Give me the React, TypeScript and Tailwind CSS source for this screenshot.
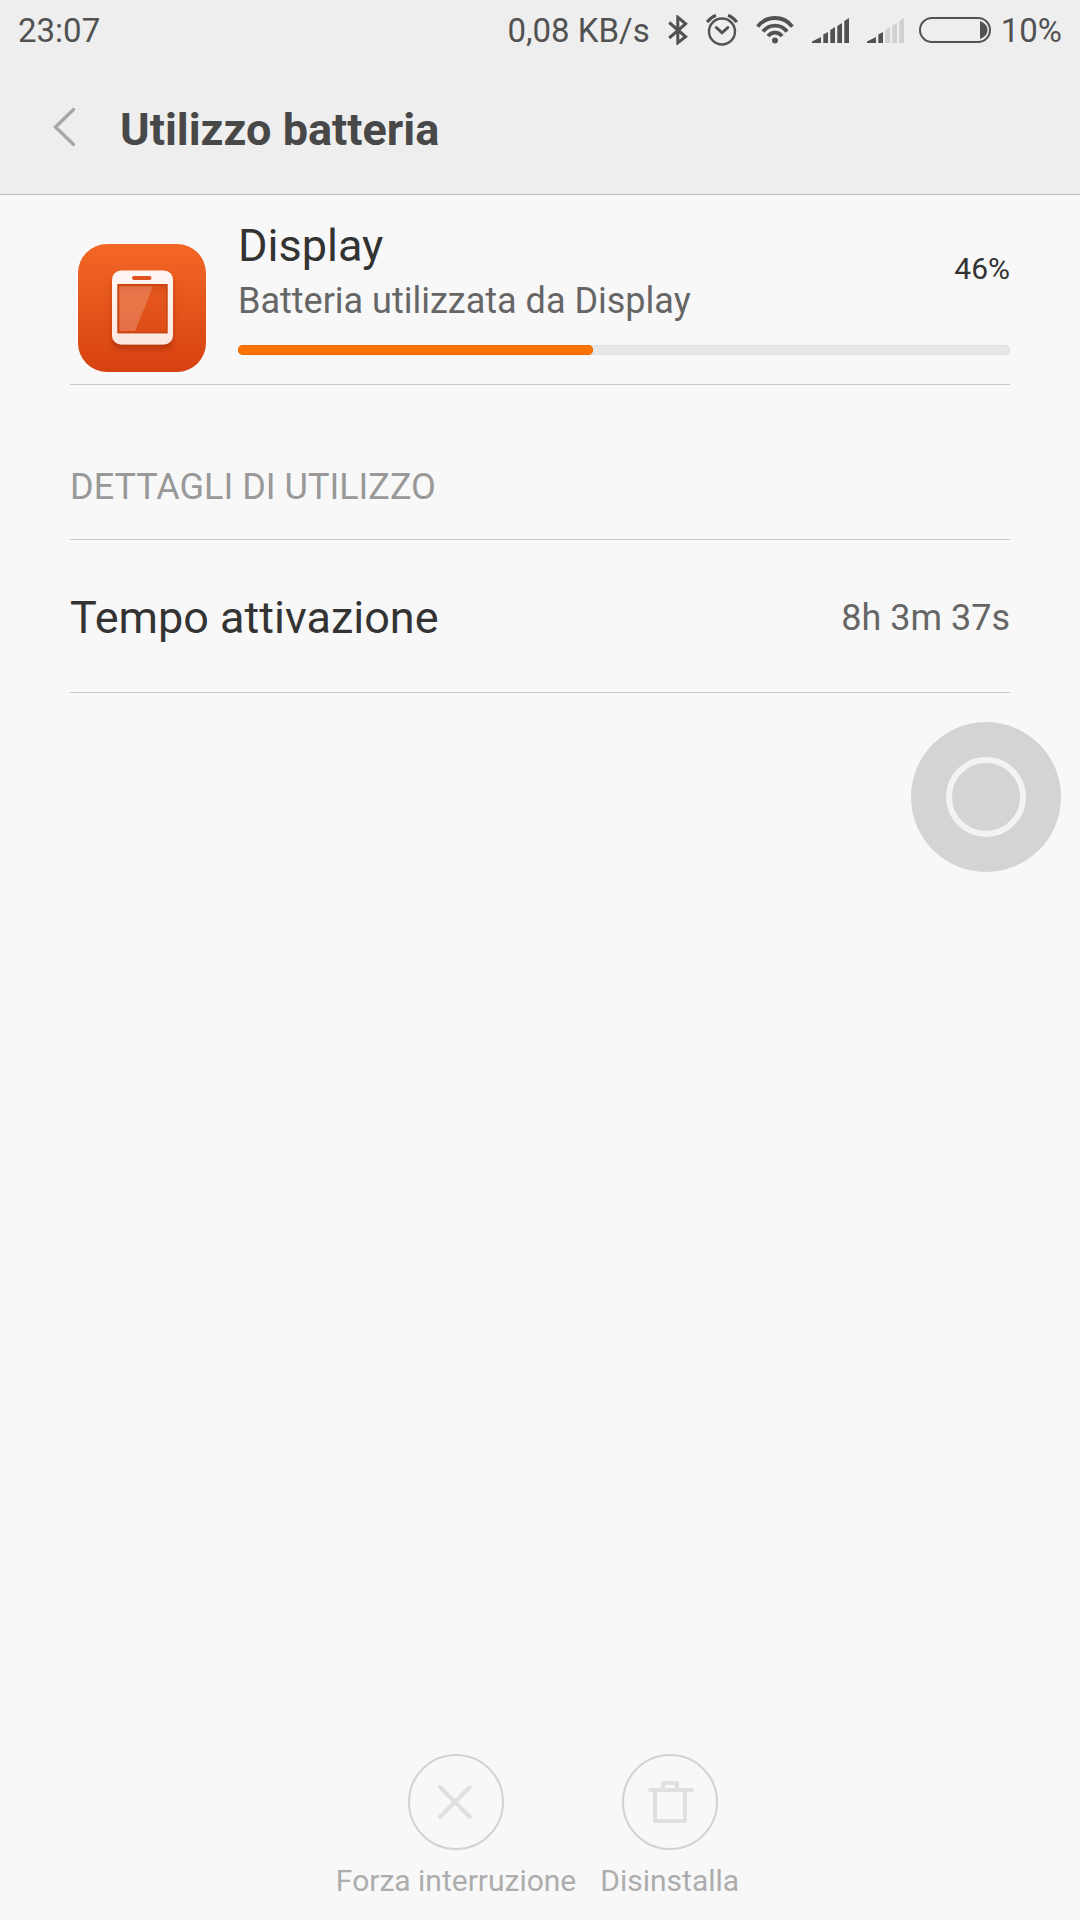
import type { ReactNode } from "react"

function BluetoothIcon() {
  return (
    <svg className="h-[30px] w-5" viewBox="0 0 20 30" fill="none" stroke="currentColor" strokeWidth="3">
      <path d="M1.2 7.5 L17.6 21.8 L9.8 27.8 V2.2 L17.6 8.8 L1.2 23" />
    </svg>
  )
}

function AlarmIcon() {
  return (
    <svg className="size-8" viewBox="0 0 32 32" fill="none" stroke="currentColor">
      <circle cx="16" cy="17.5" r="13" strokeWidth="2.4" />
      <path d="M10.3 13.5 L16 18.8 L21.9 13.5" strokeWidth="3" strokeLinecap="round" />
      <path d="M1.2 8.2 Q4.3 3.5 10 1.3 M22 1.3 Q27.7 3.5 30.8 8.2" strokeWidth="3" />
    </svg>
  )
}

function WifiIcon() {
  return (
    <svg className="h-7 w-[38px]" viewBox="0 0 38 28" fill="none" stroke="currentColor" strokeWidth="3.8">
      <path d="M1.7 10.6 A21.7 21.7 0 0 1 36.3 10.6" />
      <path d="M7 15.6 A14.9 14.9 0 0 1 31 15.6" />
      <path d="M12 20.2 A8.6 8.6 0 0 1 26 20.2" />
      <circle cx="19" cy="24.4" r="3" fill="currentColor" stroke="none" />
    </svg>
  )
}

const signalBars = [
  "M0 25 V23.5 L9 19 V25 Z",
  "M11.3 25 V16.5 L16 14 V25 Z",
  "M18.3 25 V12 L23 9 V25 Z",
  "M25.3 25 V8 L30 5 V25 Z",
  "M32.3 25 V3 L37 0 V25 Z",
]

function SignalIcon({ level }: { level: number }) {
  return (
    <svg className="h-[25px] w-[37px]" viewBox="0 0 37 25">
      {signalBars.map((d, i) => (
        <path key={d} d={d} fill={i < level ? "#525252" : "#d0d0d0"} />
      ))}
    </svg>
  )
}

function BatteryIcon() {
  return (
    <svg className="h-[26px] w-[72px]" viewBox="0 0 72 26">
      <rect x="1" y="1" width="70" height="24" rx="12" fill="none" stroke="currentColor" strokeWidth="2" />
      <path d="M61 4 C66 6 68.5 9 68.5 13 C68.5 17 66 20 61 22 Z" fill="currentColor" />
    </svg>
  )
}

function DisplayIcon() {
  return (
    <svg className="size-32 shrink-0" viewBox="0 0 128 128">
      <defs>
        <linearGradient id="tile" x1="0" y1="0" x2="0" y2="1">
          <stop offset="0" stopColor="#f36726" />
          <stop offset="1" stopColor="#d64210" />
        </linearGradient>
        <linearGradient id="phone" x1="0" y1="0" x2="0" y2="1">
          <stop offset="0" stopColor="#fff6f3" />
          <stop offset="1" stopColor="#fde7df" />
        </linearGradient>
        <linearGradient id="screen" x1="0" y1="0" x2="0" y2="1">
          <stop offset="0" stopColor="#d84f1a" />
          <stop offset="0.25" stopColor="#e4561d" />
          <stop offset="1" stopColor="#dd4d17" />
        </linearGradient>
        <filter id="shadow" x="-20%" y="-20%" width="140%" height="150%">
          <feDropShadow dx="0" dy="5" stdDeviation="2.5" floodColor="#8f2600" floodOpacity="0.45" />
        </filter>
      </defs>
      <rect width="128" height="128" rx="29" fill="url(#tile)" />
      <rect x="34" y="26.5" width="61" height="74" rx="9" fill="url(#phone)" filter="url(#shadow)" />
      <rect x="54" y="32" width="19.5" height="4" rx="2" fill="#de5220" />
      <rect x="40" y="40.7" width="49" height="48" fill="url(#screen)" stroke="#c9410f" strokeWidth="1.4" />
      <path d="M41.5 42.5 H75 L57 87 H41.5 Z" fill="#fff" fillOpacity="0.2" />
    </svg>
  )
}

function ActionButton({ label, children }: { label: string; children: ReactNode }) {
  return (
    <button disabled className="flex flex-col items-center gap-3 text-[30px] leading-[38px] text-[#adadad]">
      <svg
        className="size-24"
        viewBox="0 0 96 96"
        fill="none"
        stroke="#e0e0e0"
        strokeWidth="4"
        strokeLinecap="round"
        strokeLinejoin="round"
      >
        <circle cx="48" cy="48" r="47" stroke="#d2d2d2" strokeWidth="2" />
        {children}
      </svg>
      {label}
    </button>
  )
}

export default function App() {
  const usage = 46

  return (
    <div className="relative flex min-h-screen flex-col bg-[#f8f8f8] font-['Roboto',sans-serif]">
      <header className="border-b border-[#bababa] bg-[#eeeeee]">
        <div className="flex h-[60px] items-center justify-between px-[18px] text-[33px] text-[#525252]">
          <span className="pt-0.5">23:07</span>
          <div className="flex items-center gap-[18px]">
            <span className="pt-0.5">0,08 KB/s</span>
            <BluetoothIcon />
            <AlarmIcon />
            <WifiIcon />
            <SignalIcon level={5} />
            <div className="flex items-center gap-[15px]">
              <SignalIcon level={2} />
              <div className="flex items-center gap-[10px]">
                <BatteryIcon />
                <span className="pt-0.5">10%</span>
              </div>
            </div>
          </div>
        </div>

        <div className="flex h-[134px] items-center gap-[45px] pt-1 pl-[53px]">
          <button aria-label="Indietro" className="pb-1 text-[#a6a6a6]">
            <svg className="h-[38px] w-[22px]" viewBox="0 0 22 38" fill="none" stroke="currentColor" strokeWidth="3.4">
              <path d="M20.5 1.5 L2.5 19 L20.5 36.5" strokeLinecap="round" />
            </svg>
          </button>
          <h1 className="pt-0.5 text-[45px] leading-[54px] font-bold text-[#484848]">Utilizzo batteria</h1>
        </div>
      </header>

      <main className="px-[70px]">
        <section className="flex items-end gap-8 border-b border-[#c8c8c8] pt-6 pb-3 pl-2">
          <DisplayIcon />
          <div className="flex-1 pb-[17px]">
            <div className="flex items-start justify-between">
              <div className="leading-[54px]">
                <h2 className="text-[45px] text-[#333333]">Display</h2>
                <p className="pt-px text-[36px] text-[#666666]">Batteria utilizzata da Display</p>
              </div>
              <span className="mt-6 text-[30px] leading-[52px] text-[#333333]">{usage}%</span>
            </div>
            <div
              role="progressbar"
              aria-label="Batteria utilizzata"
              aria-valuenow={usage}
              className="mt-[17px] h-[10px] rounded-full bg-[#e8e8e8] inset-ring inset-ring-[#dedede]"
            >
              <div
                className="h-full rounded-full bg-[#ff7300] inset-ring inset-ring-[#e86a04]"
                style={{ width: `${usage}%` }}
              />
            </div>
          </div>
        </section>

        <h2 className="border-b border-[#c8c8c8] pt-[75px] pb-[25px] text-[36px] leading-[54px] text-[#999999]">
          DETTAGLI DI UTILIZZO
        </h2>

        <dl className="flex items-center justify-between border-b border-[#c8c8c8] pt-[51px] pb-[47px] leading-[54px]">
          <dt className="text-[45px] text-[#333333]">Tempo attivazione</dt>
          <dd className="text-[36px] text-[#666666]">8h 3m 37s</dd>
        </dl>
      </main>

      {/* quick ball */}
      <button
        aria-label="Quick ball"
        className="absolute top-[722px] right-[19px] flex size-[150px] items-center justify-center rounded-full bg-[#d4d4d4]"
      >
        <span className="size-20 rounded-full border-[6px] border-[#f3f3f3]" />
      </button>

      <footer className="mt-auto flex justify-center gap-6 pr-[5px] pb-5">
        <ActionButton label="Forza interruzione">
          <path d="M32 33 L62 63 M62 33 L32 63" />
        </ActionButton>
        <ActionButton label="Disinstalla">
          <path d="M28 36 H70 M33 36 V67 H63 V36 M41 36 V29 H55 V36" />
        </ActionButton>
      </footer>
    </div>
  )
}
